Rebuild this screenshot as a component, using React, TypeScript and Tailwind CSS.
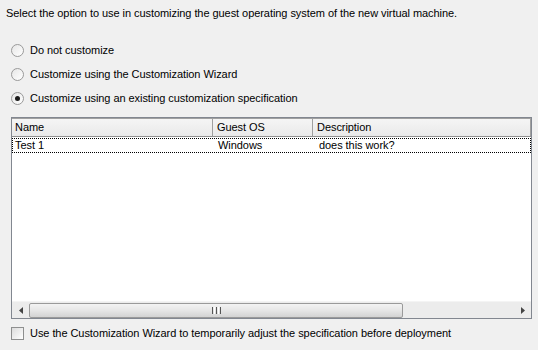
import React from 'react';

const font = { fontFamily: '"Liberation Sans", Arial, sans-serif' };

function Radio({ checked, label }: { checked?: boolean; label: string }) {
  return (
    <div className="flex items-center h-[24px]">
      <div className="ml-[11px] w-[13px] h-[13px] rounded-full border border-[#9a9a9a] bg-gradient-to-br from-[#e6e6e6] to-white flex items-center justify-center">
        {checked && <div className="w-[5px] h-[5px] rounded-full bg-[#1a1a1a]" />}
      </div>
      <span className="ml-[6px]">{label}</span>
    </div>
  );
}

export default function App() {
  return (
    <div
      className="w-[538px] h-[350px] bg-[#f0f0f0] text-[11px] leading-[13px] tracking-[-0.06px] text-black overflow-hidden"
      style={font}
    >
      {/* Intro */}
      <p className="pt-[7px] pl-[6px]">
        Select the option to use in customizing the guest operating system of the new virtual machine.
      </p>

      {/* Options */}
      <div className="mt-[18px] flex flex-col">
        <Radio label="Do not customize" />
        <Radio label="Customize using the Customization Wizard" />
        <Radio checked label="Customize using an existing customization specification" />
      </div>

      {/* Spec list */}
      <div className="mt-[7px] ml-[11px] w-[521px] h-[202px] border border-[#828790] bg-white flex flex-col">
        <div className="flex h-[19px] border-t border-[#a0a0a0] border-b border-b-[#8f8f8f] bg-gradient-to-b from-[#f5f5f5] to-[#e9e9e9]">
          <div className="w-[201px] pl-[3px] border-r border-[#a0a0a0] flex items-center">Name</div>
          <div className="w-[100px] pl-[4px] border-r border-[#a0a0a0] flex items-center">Guest OS</div>
          <div className="flex-1 pl-[4px] border-r border-[#a0a0a0] flex items-center">Description</div>
        </div>
        <div className="flex h-[15px] mt-[1px] border border-dotted border-black">
          <div className="w-[201px] pl-[2px] flex items-center">Test 1</div>
          <div className="w-[100px] pl-[4px] flex items-center">Windows</div>
          <div className="flex-1 pl-[5px] flex items-center">does this work?</div>
        </div>
        <div className="flex-1" />

        {/* Horizontal scrollbar */}
        <div className="h-[17px] flex items-center bg-[#ececec] border-t border-[#f4f4f4]">
          <div className="w-[17px] h-full flex items-center justify-center">
            <svg width="4" height="7" viewBox="0 0 4 7">
              <path d="M4 0 L0 3.5 L4 7 Z" fill="#444" />
            </svg>
          </div>
          <div className="w-[374px] h-[15px] rounded-[2px] border border-[#9a9a9a] bg-gradient-to-b from-[#f3f3f3] via-[#e6e6e6] to-[#d3d3d3] flex items-center justify-center gap-[1px]">
            <span className="w-[1px] h-[7px] bg-[#555]" />
            <span className="w-[1px] h-[7px] bg-[#fff]" />
            <span className="w-[1px] h-[7px] bg-[#555]" />
            <span className="w-[1px] h-[7px] bg-[#fff]" />
            <span className="w-[1px] h-[7px] bg-[#555]" />
          </div>
          <div className="flex-1" />
          <div className="w-[17px] h-full flex items-center justify-center">
            <svg width="4" height="7" viewBox="0 0 4 7">
              <path d="M0 0 L4 3.5 L0 7 Z" fill="#444" />
            </svg>
          </div>
        </div>
      </div>

      {/* Checkbox */}
      <div className="mt-[8px] flex items-center h-[13px]">
        <div className="ml-[11px] w-[13px] h-[13px] border border-[#8e8f8f] bg-gradient-to-br from-[#dcdcdc] to-white" />
        <span className="ml-[6px]">Use the Customization Wizard to temporarily adjust the specification before deployment</span>
      </div>
    </div>
  );
}
